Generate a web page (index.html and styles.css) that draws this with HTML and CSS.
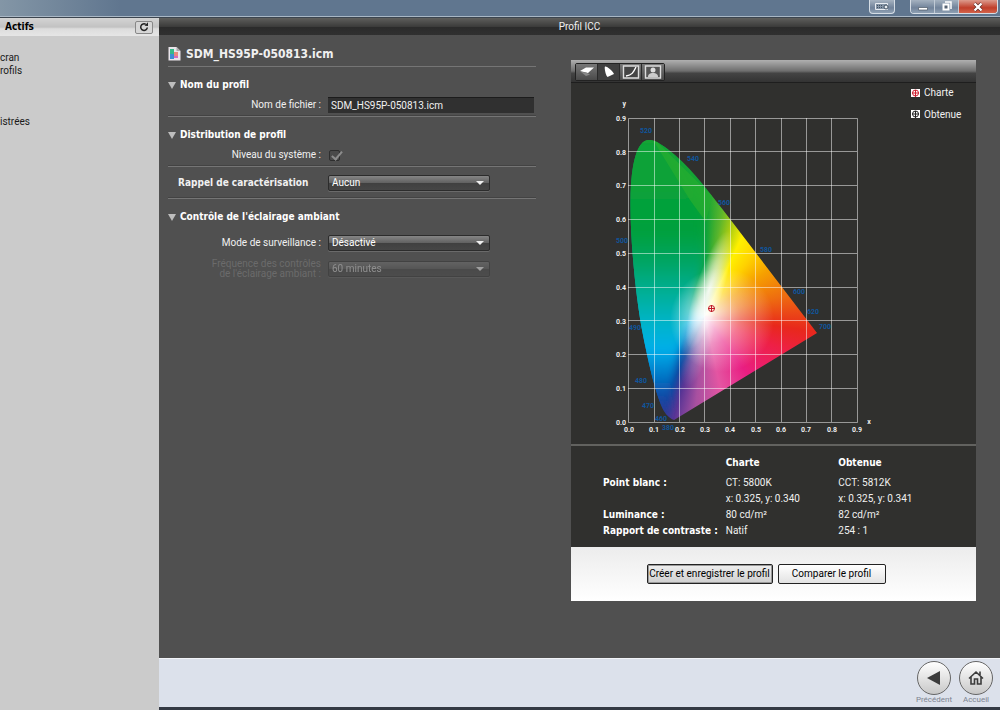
FILE: index.html
```html
<!doctype html>
<html lang="fr">
<head>
  <meta charset="utf-8">
  <title>Profil ICC</title>
  <link rel="stylesheet" href="styles.css">
</head>
<body>
  <!-- Window title bar -->
  <div class="titlebar">
    <button class="win-btn keyboard" aria-label="Clavier">
      <svg width="16" height="10" viewBox="0 0 16 10"><path d="M1.500 1.500h12v6h-12z" fill="#8494a6" stroke="#e8edf2"/><path d="M3 3.500h6M3 5.500h6" stroke="#405060" stroke-dasharray="1 1"/><circle cx="12" cy="5" r="2" fill="#e8edf2" stroke="#405060"/></svg>
    </button>
    <div class="win-group">
      <button class="win-btn" aria-label="Réduire">
        <svg width="12" height="10" viewBox="0 0 12 10"><path d="M1.500 5.500h9v2.500h-9z" fill="#fff" stroke="#4a5766" stroke-width=".7"/></svg>
      </button>
      <button class="win-btn" aria-label="Restaurer">
        <svg width="12" height="11" viewBox="0 0 12 11"><path d="M4 1h6v7" fill="none" stroke="#fff" stroke-width="1.500"/><path d="M2.500 3.500h5v5h-5z" fill="#566373" stroke="#fff" stroke-width="2"/></svg>
      </button>
      <button class="win-btn close" aria-label="Fermer">
        <svg width="12" height="10" viewBox="0 0 12 10"><path d="M2.500 1.500l7 7M9.500 1.500l-7 7" stroke="#5a2a25" stroke-width="3.600"/><path d="M2.500 1.500l7 7M9.500 1.500l-7 7" stroke="#fff" stroke-width="2.400"/></svg>
      </button>
    </div>
  </div>

  <div class="app">
    <!-- Left column -->
    <aside class="sidebar">
      <div class="sidebar-head">
        <h2>Actifs</h2>
        <button class="refresh" aria-label="Actualiser">
          <svg width="10" height="10" viewBox="0 0 10 10"><path d="M8.300 5.500a3.300 3.300 0 1 1-1.500-3.200" fill="none" stroke="#222" stroke-width="1.500"/><path d="M5.500 3.800L9 4V.3z" fill="#222"/></svg>
        </button>
      </div>
      <ul class="sidebar-list">
        <li>cran</li>
        <li>rofils</li>
        <li class="spaced">istrées</li>
      </ul>
    </aside>

    <main class="main">
      <header class="main-head">Profil ICC</header>

      <div class="content">
        <!-- Profile settings -->
        <form class="settings">
          <h1>
            <svg width="13" height="15" viewBox="0 0 13 15"><path d="M.5 1h8l4 4v9.500H.5z" fill="#e9e4ea"/><path d="M8.500 1v4h4z" fill="#aaa"/><path d="M2 3h4v5H2z" fill="#35b98a"/><path d="M2 8h4v5H2z" fill="#3b8fd4"/><path d="M6 6h4v4H6z" fill="#e98a7e"/><path d="M6 10h4v2H6z" fill="#d46ac0"/></svg>
            SDM_HS95P-050813.icm
          </h1>
          <section class="group">
            <h2 class="toggle">Nom du profil</h2>
            <div class="row">
              <label for="filename">Nom de fichier :</label>
              <input id="filename" class="field" type="text" value="SDM_HS95P-050813.icm">
            </div>
          </section>
          <section class="group">
            <h2 class="toggle">Distribution de profil</h2>
            <div class="row">
              <label for="system">Niveau du système :</label>
              <input id="system" class="check" type="checkbox" checked disabled>
            </div>
          </section>
          <section class="group single">
            <div class="row">
              <label for="reminder" class="strong">Rappel de caractérisation</label>
              <span class="select"><select id="reminder"><option>Aucun</option></select></span>
            </div>
          </section>
          <section class="group last">
            <h2 class="toggle">Contrôle de l'éclairage ambiant</h2>
            <div class="row">
              <label for="watch">Mode de surveillance :</label>
              <span class="select"><select id="watch"><option>Désactivé</option></select></span>
            </div>
            <div class="row disabled">
              <label for="frequency">Fréquence des contrôles<br>de l'éclairage ambiant :</label>
              <span class="select"><select id="frequency" disabled><option>60 minutes</option></select></span>
            </div>
          </section>
        </form>

        <!-- Chart and measured values -->
        <section class="panel">
          <div class="toolbar">
            <div class="tools">
              <button aria-label="Gamut 3D"><svg width="18" height="14" viewBox="0 0 18 14"><path d="M2 6l6-3.500h8l-6 5.500-2-.5z" fill="#fff"/><path d="M3 7l5 .5 4 2-4 1.500z" fill="#888"/></svg></button>
              <button class="active" aria-label="Chromaticité"><svg width="18" height="14" viewBox="0 0 18 14"><path d="M5 1.500C7 1 13 6 14 9l-6.500 3C6 11 4 3 5 1.500z" fill="#fff"/></svg></button>
              <button aria-label="Courbe"><svg width="18" height="14" viewBox="0 0 18 14"><path d="M1.500 1h15v12h-15z" fill="#444" stroke="#ddd" stroke-width="1.400"/><path d="M4 11c6-1 7-3 10-9" fill="none" stroke="#fff" stroke-width="1.400"/></svg></button>
              <button aria-label="Image"><svg width="18" height="14" viewBox="0 0 18 14"><path d="M1.500 1h15v12h-15z" fill="#555" stroke="#ddd" stroke-width="1.400"/><circle cx="9" cy="5" r="2.500" fill="#ddd"/><path d="M4 12c0-3 2-4 5-4s5 1 5 4z" fill="#ccc"/></svg></button>
            </div>
          </div>

          <svg class="chart" viewBox="571 83 405 361">
            <defs>
              <clipPath id="locus">
                <path d="M674 420L817 333L730 219C712 196 695 172 675 155C664 146 656 140 649 140C637 140 631 163 630.500 200C630 240 636 300 643 335C649 365 656 396 664 411C667 416 671 419 674 420z"/>
              </clipPath>
              <linearGradient id="greens" gradientUnits="userSpaceOnUse" x1="0" y1="140" x2="0" y2="420">
                <stop offset="0" stop-color="#12a336"/>
                <stop offset=".33" stop-color="#00a03c"/>
                <stop offset=".44" stop-color="#00a565"/>
                <stop offset=".56" stop-color="#00b09c"/>
                <stop offset=".66" stop-color="#00b4cc"/>
                <stop offset=".75" stop-color="#00aeea"/>
                <stop offset=".84" stop-color="#0078c8"/>
                <stop offset=".92" stop-color="#1248a4"/>
                <stop offset="1" stop-color="#3a3490"/>
              </linearGradient>
              <radialGradient id="white" gradientUnits="userSpaceOnUse" cx="722" cy="320" r="52" fx="706" fy="314">
                <stop offset="0" stop-color="#fff" stop-opacity=".95"/>
                <stop offset=".15" stop-color="#fff" stop-opacity=".8"/>
                <stop offset=".5" stop-color="#fff" stop-opacity=".4"/>
                <stop offset="1" stop-color="#fff" stop-opacity="0"/>
              </radialGradient>
              <radialGradient id="streak">
                <stop offset="0" stop-color="#fff" stop-opacity=".9"/>
                <stop offset=".5" stop-color="#fff" stop-opacity=".5"/>
                <stop offset="1" stop-color="#fff" stop-opacity="0"/>
              </radialGradient>
              <filter id="soft" x="-30%" y="-10%" width="160%" height="120%"><feGaussianBlur stdDeviation="5"/></filter>
            </defs>

            <g clip-path="url(#locus)">
              <foreignObject x="621" y="130" width="210" height="300"><div class="spectrum"></div></foreignObject>
              <path d="M600 110H650L706 215L704 265L690 310L676 360L664 430H600z" fill="url(#greens)" filter="url(#soft)"/>
              <path d="M650 135L712 196L706 222L690 200z" fill="#24ac30" opacity=".8"/>
              <ellipse cx="709" cy="290" rx="14" ry="62" fill="url(#streak)" transform="rotate(18 709 290)"/>
              <ellipse cx="698" cy="340" rx="14" ry="48" fill="url(#streak)" opacity=".4" transform="rotate(14 698 340)"/>
              <circle cx="722" cy="320" r="52" fill="url(#white)"/>
            </g>

            <path class="grid" d="M628.500 118.500h229v304h-229zM654.500 118v304M679.500 118v304M704.500 118v304M730.500 118v304M755.500 118v304M781.500 118v304M806.500 118v304M831.500 118v304M628 151.500h229M628 185.500h229M628 219.500h229M628 253.500h229M628 287.500h229M628 320.500h229M628 354.500h229M628 388.500h229"/>

            <g class="axis left">
              <text x="626" y="106">y</text>
              <text x="626" y="121">0.9</text>
              <text x="626" y="155">0.8</text>
              <text x="626" y="188">0.7</text>
              <text x="626" y="222">0.6</text>
              <text x="626" y="256">0.5</text>
              <text x="626" y="290">0.4</text>
              <text x="626" y="324">0.3</text>
              <text x="626" y="357">0.2</text>
              <text x="626" y="391">0.1</text>
              <text x="626" y="425">0.0</text>
            </g>
            <g class="axis">
              <text x="629" y="432">0.0</text>
              <text x="654" y="432">0.1</text>
              <text x="680" y="432">0.2</text>
              <text x="705" y="432">0.3</text>
              <text x="730" y="432">0.4</text>
              <text x="756" y="432">0.5</text>
              <text x="781" y="432">0.6</text>
              <text x="806" y="432">0.7</text>
              <text x="832" y="432">0.8</text>
              <text x="857" y="432">0.9</text>
              <text x="869" y="424">x</text>
            </g>

            <!-- Wavelengths in nm -->
            <g class="axis wave">
              <text x="646" y="133">520</text>
              <text x="693" y="161">540</text>
              <text x="724" y="205">560</text>
              <text x="766" y="252">580</text>
              <text x="799" y="294">600</text>
              <text x="813" y="314">620</text>
              <text x="825" y="329">700</text>
              <text x="622" y="243">500</text>
              <text x="635" y="330">490</text>
              <text x="641" y="383">480</text>
              <text x="648" y="408">470</text>
              <text x="661" y="421">460</text>
              <text x="668" y="430">380</text>
            </g>

            <!-- Measured white point -->
            <g fill="none" stroke="#c01828">
              <circle cx="711.500" cy="308.500" r="3"/>
              <path d="M708 308.500h7M711.500 305v7"/>
            </g>

            <g class="legend">
              <path d="M911 89h9v8h-9z" fill="#fff"/>
              <g fill="none" stroke="#d02030"><circle cx="915.500" cy="93" r="3"/><path d="M912 93h7M915.500 90v7"/></g>
              <text x="924" y="96">Charte</text>
              <path d="M911 110h9v8h-9z" fill="#fff"/>
              <g fill="none" stroke="#222"><circle cx="915.500" cy="114" r="3"/><path d="M912 114h7M915.500 111v7"/></g>
              <text x="924" y="118">Obtenue</text>
            </g>
          </svg>

          <div class="values">
            <table>
              <thead>
                <tr><td></td><th>Charte</th><th>Obtenue</th></tr>
              </thead>
              <tbody>
                <tr><th>Point blanc :</th><td>CT: 5800K</td><td>CCT: 5812K</td></tr>
                <tr><th></th><td>x: 0.325, y: 0.340</td><td>x: 0.325, y: 0.341</td></tr>
                <tr><th>Luminance :</th><td>80 cd/m²</td><td>82 cd/m²</td></tr>
                <tr><th>Rapport de contraste :</th><td>Natif</td><td>254 : 1</td></tr>
              </tbody>
            </table>
          </div>

          <div class="actions">
            <button class="primary">Créer et enregistrer le profil</button>
            <button>Comparer le profil</button>
          </div>
        </section>
      </div>

      <footer class="bottom">
        <button class="nav">
          <span class="disc"><svg width="18" height="18" viewBox="0 0 18 18"><path d="M2 9l13-7v14z" fill="#3c3c3c"/></svg></span>
          Précédent
        </button>
        <button class="nav">
          <span class="disc"><svg width="18" height="18" viewBox="0 0 18 18"><path d="M2 9.500L9 3l7 6.500M4 8v7h3.500v-5h3v5H14V8M13 6V2.500" fill="none" stroke="#3c3c3c" stroke-width="1.600"/></svg></span>
          Accueil
        </button>
      </footer>
    </main>
  </div>
</body>
</html>
```
FILE: styles.css
```css
* {
  box-sizing: border-box;
}

body {
  margin: 0;
  min-height: 100vh;
  display: flex;
  flex-direction: column;
  font: 10px/14px Roboto, "Noto Sans", sans-serif;
  color: #f0f0f0;
  background: #505050;
}

h1, h2, ul {
  margin: 0;
  padding: 0;
}

h1, h2, th, .row label.strong {
  font-family: "DejaVu Sans Condensed", sans-serif;
}

h2 {
  font-size: 10px;
}

button, input, select {
  font: inherit;
  margin: 0;
  padding: 0;
}

svg {
  display: block;
}

/* Title bar */
.titlebar {
  display: flex;
  justify-content: flex-end;
  gap: 15px;
  height: 18px;
  padding: 0 2px 3px 0;
  background: linear-gradient(90deg, rgba(140, 158, 172, 0.8), rgba(96, 118, 143, 0) 12%), #60768f;
  border-bottom: 1px solid #3c454f;
  box-shadow: inset 0 -1px #a9b7c5;
}

.win-group {
  display: flex;
  border: 1px solid #d5dde5;
  border-top: 0;
  border-radius: 0 0 4px 4px;
  overflow: hidden;
}

.win-btn {
  display: flex;
  align-items: center;
  justify-content: center;
  width: 24px;
  border: 0;
  border-right: 1px solid #c0cad5;
  background: linear-gradient(#a5b2c0, #71839a 60%, #8fa0b3);
}

.win-btn.keyboard {
  width: 26px;
  border: 1px solid #d5dde5;
  border-top: 0;
  border-radius: 0 0 4px 4px;
}

.win-btn.close {
  width: 38px;
  border: 0;
  background: linear-gradient(#dc9b8d, #c03e2a 60%, #d4644c);
}

/* Page frame */
.app {
  flex: 1;
  display: grid;
  grid-template-columns: 159px 1fr;
}

.sidebar {
  color: #1a1a1a;
  background: #cbcbcb;
}

.sidebar-head {
  display: flex;
  align-items: center;
  justify-content: space-between;
  height: 18px;
  padding: 0 6px 0 5px;
  background: linear-gradient(#d4d4d4, #c2c2c2 50%, #dcdcdc 60%, #e6e6e6);
}

.sidebar-head h2 {
  color: #000;
}

.refresh {
  display: flex;
  align-items: center;
  justify-content: center;
  width: 18px;
  height: 13px;
  border: 1px solid #888;
  border-radius: 2px;
  background: #d6d6d6;
}

.sidebar-list {
  padding-top: 15px;
  line-height: 13px;
  list-style: none;
}

.sidebar-list .spaced {
  margin-top: 38px;
}

.main {
  display: flex;
  flex-direction: column;
}

.main-head {
  height: 17px;
  line-height: 18px;
  text-align: center;
  background: linear-gradient(#5e5e5c, #3c3c3b 50%, #2b2b2b 55%, #303030);
}

.content {
  flex: 1;
  display: grid;
  grid-template-columns: 368px 1fr;
  align-items: start;
  gap: 35px;
  padding: 0 24px 32px 9px;
}

/* Settings form */
.settings {
  padding-top: 6px;
}

.settings h1 {
  display: flex;
  align-items: center;
  gap: 5px;
  height: 26px;
  font-size: 12px;
  border-bottom: 1px solid #757575;
}

.group {
  padding: 11px 0 3px;
  border-bottom: 1px solid #757575;
  box-shadow: inset 0 -1px #434343;
}

.group.single {
  padding: 8px 0 7px;
}

.group.last {
  border: 0;
  box-shadow: none;
}

.toggle {
  display: flex;
  align-items: center;
  gap: 4px;
  color: #fff;
}

.toggle::before {
  content: "";
  border: 4px solid transparent;
  border-top: 7px solid #bdbdbd;
  border-bottom: 0;
}

.row {
  display: grid;
  grid-template-columns: 153px 1fr;
  align-items: center;
  gap: 7px;
  min-height: 16px;
  margin-top: 5px;
}

.single .row {
  margin-top: 0;
}

.last .row {
  margin-top: 11px;
}

.last .row.disabled {
  margin-top: 8px;
}

.row label {
  text-align: right;
}

.row label.strong {
  padding-left: 10px;
  font-weight: bold;
  text-align: left;
  white-space: nowrap;
}

.field {
  width: 206px;
  height: 16px;
  padding: 0 3px 1px;
  color: #f0f0f0;
  background: #303030;
  border: 0;
  border-top: 1px solid #1c1c1c;
}

.check {
  appearance: none;
  position: relative;
  width: 11px;
  height: 11px;
  margin-left: 1px;
  border: 1px solid #2e2e2e;
  border-radius: 2px;
  background: #4a4a4a;
}

.check::after {
  content: "";
  position: absolute;
  left: 4px;
  top: -2px;
  width: 4px;
  height: 9px;
  border: solid #8c8c8c;
  border-width: 0 2px 2px 0;
  transform: rotate(40deg);
}

.select {
  position: relative;
  width: 162px;
}

.select select {
  display: block;
  appearance: none;
  width: 100%;
  height: 16px;
  padding: 0 3px 1px;
  color: #fff;
  background: linear-gradient(#858585, #626262 48%, #404040 52%, #464646);
  border: 1px solid #2c2c2c;
  border-radius: 2px;
  box-shadow: 0 1px #6a6a6a;
}

.select::after {
  content: "";
  position: absolute;
  right: 6px;
  top: 6px;
  border: 4px solid transparent;
  border-top-color: #eee;
  border-bottom: 0;
}

.disabled label {
  color: #6b6b6b;
  line-height: 10px;
}

.disabled .select {
  opacity: 0.5;
}

/* Chart panel */
.panel {
  margin-top: 25px;
  background: #30302e;
}

.toolbar {
  height: 23px;
  padding: 3px 4px;
  background: linear-gradient(#b0b0b0, #6e6e6e 50%, #444 60%, #333);
  border-bottom: 1px solid #1e1e1e;
}

.tools {
  display: inline-flex;
  border: 1px solid #222;
  border-radius: 2px;
}

.tools button {
  display: flex;
  align-items: center;
  justify-content: center;
  width: 22px;
  height: 16px;
  border: 0;
  border-right: 1px solid #2a2a2a;
  background: linear-gradient(#777, #4a4a4a);
}

.tools button:last-child {
  border-right: 0;
}

.tools .active {
  background: #3f3f3f;
}

.chart {
  width: 100%;
}

.spectrum {
  width: 210px;
  height: 300px;
  background: conic-gradient(
    from 0deg at 84px 186px,
    #12a336 0deg,
    #5ab52c 9deg,
    #a9cc12 16deg,
    #fff000 25deg,
    #ffd200 38deg,
    #f6a000 54deg,
    #ee6c10 76deg,
    #e8281c 98deg,
    #ee2045 113deg,
    #e91e82 144deg,
    #e455a2 168deg,
    #a850a0 186deg,
    #5a3595 197deg,
    #10419c 206deg,
    #0080cc 223deg,
    #00aeea 247deg,
    #00b3b3 284deg,
    #00a87c 312deg,
    #00a04c 332deg,
    #1ca636 343deg,
    #12a336 360deg
  );
}

.grid {
  fill: none;
  stroke: #fff;
  stroke-opacity: 0.5;
}

.axis {
  font-size: 7px;
  font-weight: bold;
  fill: #eee;
  text-anchor: middle;
}

.axis.left {
  text-anchor: end;
}

.axis.wave {
  fill: #0f559c;
}

.legend {
  fill: #f0f0f0;
}

/* Values table */
.values {
  padding: 9px 32px 8px;
  border-top: 2px solid #62625f;
}

.values table {
  width: 100%;
  border-collapse: collapse;
  table-layout: fixed;
}

.values th, .values td {
  height: 16px;
  padding: 0;
  text-align: left;
  white-space: nowrap;
}

.values th {
  color: #fff;
}

.values tr > :first-child {
  width: 36%;
}

.values tr > :nth-child(2) {
  width: 33%;
}

.values thead td, .values thead th {
  height: 20px;
  padding-bottom: 4px;
}

.actions {
  display: flex;
  justify-content: center;
  gap: 5px;
  padding: 17px 31px 17px 16px;
  background: linear-gradient(#ececec, #fff);
}

.actions button {
  width: 108px;
  height: 20px;
  color: #000;
  white-space: nowrap;
  border: 1px solid #222;
  border-radius: 2px;
  background: linear-gradient(#fff, #e2e2e2);
}

.actions .primary {
  width: 126px;
  background: linear-gradient(#eee, #cfcfcf);
  box-shadow: inset 0 0 0 1px #999;
}

/* Bottom bar */
.bottom {
  display: flex;
  justify-content: flex-end;
  height: 52px;
  padding: 2px 3px 0;
  background: #dce1eb;
  border-top: 1px solid #f2f4f8;
  border-bottom: 3px solid #343a44;
}

.nav {
  display: flex;
  flex-direction: column;
  align-items: center;
  width: 42px;
  font-size: 8px;
  line-height: 10px;
  color: #7d8490;
  border: 0;
  background: none;
}

.disc {
  display: flex;
  align-items: center;
  justify-content: center;
  width: 34px;
  height: 34px;
  border: 1px solid #666;
  border-radius: 50%;
  background: linear-gradient(#fff, #c8c8c8);
}
```
